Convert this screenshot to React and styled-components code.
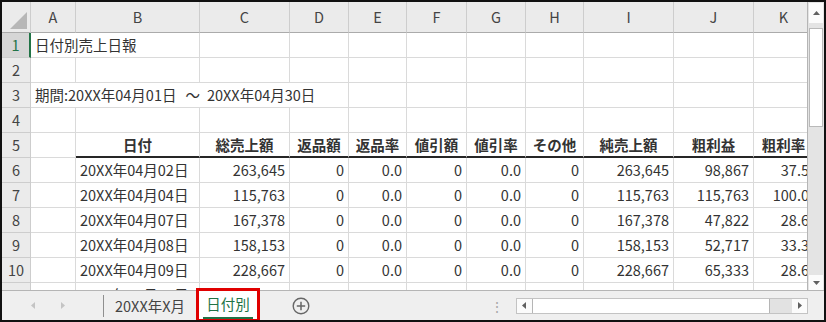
import React from 'react'
import styled, { createGlobalStyle } from 'styled-components'

const GlobalStyle = createGlobalStyle`
  *, *::before, *::after { box-sizing: border-box; }
  html, body { margin: 0; padding: 0; background: #fff; }
  body { font-family: "Noto Sans CJK JP", "Noto Sans", sans-serif; }
`

const GRID = '29px 45px 124px 90px 59px 58px 60px 59px 58px 90px 80px 60px'
const LETTERS = ['A', 'B', 'C', 'D', 'E', 'F', 'G', 'H', 'I', 'J', 'K']
const GREEN = '#217346'

const Frame = styled.div`
  width: 826px;
  height: 322px;
  border: 2px solid #111;
  display: flex;
  flex-direction: column;
  overflow: hidden;
  background: #fff;
  color: #333;
`

const Main = styled.div`
  flex: 1;
  min-height: 0;
  display: flex;
`

const Sheet = styled.div`
  flex: 1;
  min-width: 0;
  overflow: hidden;
  background: #fff;
`

const HeaderRow = styled.div`
  display: grid;
  grid-template-columns: ${GRID};
  height: 31px;
  background: #ebebeb;
`

const ColHead = styled.div`
  border-right: 1px solid #cdcdcd;
  border-bottom: 1px solid #ababab;
  font-size: 14.5px;
  line-height: 30px;
  text-align: center;
  color: #444;
`

const Corner = styled.div`
  border-right: 1px solid #cdcdcd;
  border-bottom: 1px solid #ababab;
  display: flex;
  align-items: flex-end;
  justify-content: flex-end;
  padding: 0 3px 3px 0;
`

const Row = styled.div`
  display: grid;
  grid-template-columns: ${GRID};
  height: 25px;
`

const RowHead = styled.div`
  background: ${(p) => (p.$active ? '#d6d6d6' : '#ebebeb')};
  color: ${(p) => (p.$active ? GREEN : '#444')};
  border-right: ${(p) => (p.$active ? `2px solid ${GREEN}` : '1px solid #cdcdcd')};
  border-bottom: 1px solid #cdcdcd;
  font-size: 14.5px;
  line-height: 24px;
  text-align: center;
`

const Cell = styled.div`
  grid-column: span ${(p) => p.$span || 1};
  border-right: 1px solid #dadada;
  border-bottom: ${(p) => (p.$rule ? '2px solid #262626' : '1px solid #dadada')};
  padding: 0 4px;
  font-size: 14.5px;
  line-height: 24px;
  white-space: nowrap;
  overflow: hidden;
  text-align: ${(p) => p.$align || 'left'};
  font-weight: ${(p) => (p.$bold ? 700 : 400)};
  color: #333;
`

const Wave = styled.span`
  margin: 0 7px 0 9px;
`

const VScroll = styled.div`
  width: 17px;
  flex: none;
  display: flex;
  flex-direction: column;
  background: #e4e4e4;
  border-left: 1px solid #b5b5b5;
  padding: 1px 1px 0 1px;
`

const ScrollButton = styled.div`
  flex: none;
  height: ${(p) => p.$h}px;
  width: ${(p) => p.$w || 'auto'};
  display: flex;
  align-items: center;
  justify-content: center;
  background: #fbfbfb;
`

const VThumb = styled.div`
  height: 99px;
  margin-top: 5px;
  background: #fff;
  border: 1px solid #b9b9b9;
  flex: none;
`

const Track = styled.div`
  flex: 1;
`

const TabBar = styled.div`
  height: 30px;
  flex: none;
  display: flex;
  align-items: center;
  background: #efefef;
  border-top: 1px solid #b5b5b5;
`

const Nav = styled.div`
  width: 101px;
  display: flex;
  align-items: center;
  gap: 22px;
  padding-left: 28px;
`

const Divider = styled.div`
  width: 1px;
  height: 22px;
  background: #8f8f8f;
`

const Tab = styled.div`
  padding: 0 14px 0 11px;
  font-size: 14.5px;
  color: #444;
  line-height: 26px;
`

const ActiveTab = styled.div`
  width: 58px;
  height: 28px;
  align-self: flex-end;
  margin-bottom: 1px;
  background: #fff;
  outline: 3px solid #e00000;
  display: flex;
  justify-content: center;
  position: relative;
  font-size: 14.5px;
  line-height: 25px;
  color: ${GREEN};

  &::after {
    content: '';
    position: absolute;
    left: 4px;
    right: 4px;
    bottom: 0;
    height: 2px;
    background: ${GREEN};
  }
`

const AddSheet = styled.div`
  margin-left: 35px;
  display: flex;
`

const Spacer = styled.div`
  flex: 1;
`

const Grip = styled.div`
  color: #a8a8a8;
  font-size: 14px;
  margin-right: 12px;
  line-height: 1;
`

const HScroll = styled.div`
  width: 292px;
  height: 16px;
  margin-right: 16px;
  display: flex;
  border: 1px solid #c3c3c3;
  background: #e2e2e2;
`

const HThumb = styled.div`
  width: 238px;
  background: #fff;
  border: 1px solid #b5b5b5;
  border-top: none;
  border-bottom: none;
`

const Tri = ({ dir, color = '#606060', size = 7 }) => {
  const pts = {
    up: '0,5 7,5 3.5,1',
    down: '0,2 7,2 3.5,6',
    left: '5,0 5,7 1,3.5',
    right: '2,0 2,7 6,3.5',
  }[dir]
  return (
    <svg width={size} height={size} viewBox="0 0 7 7">
      <polygon points={pts} fill={color} />
    </svg>
  )
}

const headers = ['日付', '総売上額', '返品額', '返品率', '値引額', '値引率', 'その他', '純売上額', '粗利益', '粗利率']

const data = [
  ['20XX年04月02日', '263,645', '0', '0.0', '0', '0.0', '0', '263,645', '98,867', '37.5'],
  ['20XX年04月04日', '115,763', '0', '0.0', '0', '0.0', '0', '115,763', '115,763', '100.0'],
  ['20XX年04月07日', '167,378', '0', '0.0', '0', '0.0', '0', '167,378', '47,822', '28.6'],
  ['20XX年04月08日', '158,153', '0', '0.0', '0', '0.0', '0', '158,153', '52,717', '33.3'],
  ['20XX年04月09日', '228,667', '0', '0.0', '0', '0.0', '0', '228,667', '65,333', '28.6'],
  ['20XX年04月10日', '204,512', '0', '0.0', '0', '0.0', '0', '204,512', '61,354', '30.0'],
]

const blanks = (n) => Array.from({ length: n }, (_, i) => <Cell key={'b' + i} />)

const App = () => (
  <>
    <GlobalStyle />
    <Frame>
      <Main>
        <Sheet>
          <HeaderRow>
            <Corner>
              <svg width="17" height="17" viewBox="0 0 17 17">
                <polygon points="0,17 17,17 17,0" fill="#b7b7b7" />
              </svg>
            </Corner>
            {LETTERS.map((l) => (
              <ColHead key={l}>{l}</ColHead>
            ))}
          </HeaderRow>

          <Row>
            <RowHead $active>1</RowHead>
            <Cell $span={2}>日付別売上日報</Cell>
            {blanks(9)}
          </Row>
          <Row>
            <RowHead>2</RowHead>
            {blanks(11)}
          </Row>
          <Row>
            <RowHead>3</RowHead>
            <Cell $span={4}>
              期間:20XX年04月01日<Wave>～</Wave>20XX年04月30日
            </Cell>
            {blanks(7)}
          </Row>
          <Row>
            <RowHead>4</RowHead>
            {blanks(11)}
          </Row>
          <Row>
            <RowHead>5</RowHead>
            <Cell />
            {headers.map((h) => (
              <Cell key={h} $bold $rule $align="center">
                {h}
              </Cell>
            ))}
          </Row>
          {data.map((r, i) => (
            <Row key={i}>
              <RowHead>{i + 6}</RowHead>
              <Cell />
              {r.map((v, j) => (
                <Cell key={j} $align={j === 0 ? 'left' : 'right'}>
                  {v}
                </Cell>
              ))}
            </Row>
          ))}
        </Sheet>
        <VScroll>
          <ScrollButton $h={20}>
            <Tri dir="up" />
          </ScrollButton>
          <VThumb />
          <Track />
          <ScrollButton $h={15}>
            <Tri dir="down" />
          </ScrollButton>
        </VScroll>
      </Main>

      <TabBar>
        <Nav>
          <Tri dir="left" color="#c4c4c4" />
          <Tri dir="right" color="#c4c4c4" />
        </Nav>
        <Divider />
        <Tab>20XX年X月</Tab>
        <ActiveTab>日付別</ActiveTab>
        <AddSheet>
          <svg width="18" height="18" viewBox="0 0 18 18">
            <circle cx="9" cy="9" r="7.8" fill="none" stroke="#666" strokeWidth="1.4" />
            <path d="M9 4.8v8.4M4.8 9h8.4" stroke="#666" strokeWidth="1.5" />
          </svg>
        </AddSheet>
        <Spacer />
        <Grip>⋮</Grip>
        <HScroll>
          <ScrollButton $h={14} $w="15px">
            <Tri dir="left" />
          </ScrollButton>
          <HThumb />
          <Track />
          <ScrollButton $h={14} $w="15px">
            <Tri dir="right" />
          </ScrollButton>
        </HScroll>
      </TabBar>
    </Frame>
  </>
)

export default App
